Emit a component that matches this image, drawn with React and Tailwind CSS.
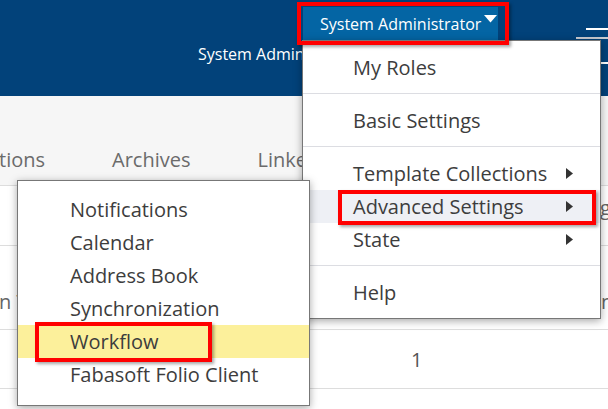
import React from "react";

function Arrow() {
  return (
    <svg width="7" height="11" viewBox="0 0 7 11" className="block">
      <path d="M0 0 L7 5.5 L0 11 Z" fill="#333" />
    </svg>
  );
}

function MenuItem({ label, arrow, active }) {
  return (
    <div
      className={
        "h-[33px] flex items-center justify-between pl-[50px] pr-[27px] " +
        (active ? "bg-[#eef0f5]" : "")
      }
    >
      <span>{label}</span>
      {arrow ? <Arrow /> : null}
    </div>
  );
}

export default function App() {
  const sub = [
    "Notifications",
    "Calendar",
    "Address Book",
    "Synchronization",
    "Workflow",
    "Fabasoft Folio Client",
  ];
  return (
    <div className="relative w-[608px] h-[409px] overflow-hidden bg-white font-['Open_Sans',sans-serif]">
      {/* header */}
      <header className="relative h-[96px] bg-[#02427a]">
        <div className="pt-[43px] pl-[198px] text-[16px] leading-[22px] text-white whitespace-nowrap">
          System Administrator
        </div>
        <svg
          className="absolute right-0 top-[27px]"
          width="32"
          height="40"
          viewBox="0 0 32 40"
        >
          <rect x="10" y="1" width="22" height="2" fill="#fff" />
          <rect x="0" y="10" width="32" height="2" fill="#c9ccd2" />
          <rect x="25" y="35" width="7" height="2" fill="#fff" />
        </svg>
      </header>

      {/* tabs band */}
      <div className="h-[90px] bg-[#f6f6f6] border-b border-[#dddddd] flex items-end gap-[67px] pb-[12px] text-[20px] leading-[27px] text-[#6b6b6b] whitespace-nowrap">
        <span className="-ml-[1px]">tions</span>
        <span>Archives</span>
        <span>Linked Objects</span>
      </div>

      {/* table rows */}
      <div className="h-[60px] border-b border-[#dddddd] flex justify-between pt-[8px] text-[20px] leading-[27px] text-[#666]">
        <span></span>
        <span className="w-[8px] overflow-hidden">g</span>
      </div>
      <div className="h-[84px] border-b border-[#dddddd] flex items-end justify-between pb-[14px] text-[20px] leading-[27px] text-[#666] whitespace-nowrap">
        <span className="-ml-[1px]">n T</span>
        <span className="w-[7px] overflow-hidden">n</span>
      </div>
      <div className="h-[59px] border-b border-[#dddddd] flex items-center pl-[411px] text-[20px] leading-[27px] text-[#555]">
        1
      </div>

      {/* trigger button */}
      <div className="absolute left-[303px] top-[7px] w-[195px] h-[33px] bg-[#0465a4] flex items-center pl-[17px] text-[16px] text-white whitespace-nowrap">
        <span>System Administrator</span>
        <svg className="ml-[3px] -mt-[10px]" width="13" height="8" viewBox="0 0 13 8">
          <path d="M0 0 L13 0 L6.5 7.5 Z" fill="#fff" />
        </svg>
      </div>

      {/* main dropdown */}
      <div className="absolute left-[302px] top-[40px] w-[299px] bg-white border border-[#777] shadow-[0_2px_8px_rgba(0,0,0,0.35)] text-[20px] text-[#3d3d3d] whitespace-nowrap">
        <div className="pt-[10px] pb-[9px] border-b border-[#dcdde2]">
          <MenuItem label="My Roles" />
        </div>
        <div className="pt-[10px] pb-[9px] border-b border-[#dcdde2]">
          <MenuItem label="Basic Settings" />
        </div>
        <div className="pt-[10px] pb-[9px] border-b border-[#dcdde2]">
          <MenuItem label="Template Collections" arrow />
          <MenuItem label="Advanced Settings" arrow active />
          <MenuItem label="State" arrow />
        </div>
        <div className="pt-[10px] pb-[9px]">
          <MenuItem label="Help" />
        </div>
      </div>

      {/* submenu */}
      <div className="absolute left-[17px] top-[180px] w-[293px] h-[226px] bg-white border border-[#777] shadow-[0_2px_8px_rgba(0,0,0,0.35)] pt-[12px] text-[20px] text-[#3d3d3d] whitespace-nowrap">
        {sub.map((s) => (
          <div
            key={s}
            className={
              "h-[33px] flex items-center pl-[52px] " +
              (s === "Workflow" ? "bg-[#fcf09b]" : "")
            }
          >
            {s}
          </div>
        ))}
      </div>

      {/* red annotation boxes */}
      <div className="absolute left-[297px] top-[2px] w-[212px] h-[43px] border-[4px] border-[#f00] shadow-[2px_2px_3px_rgba(0,0,0,0.35)]" />
      <div className="absolute left-[338px] top-[190px] w-[258px] h-[35px] border-[4px] border-[#f00] shadow-[2px_2px_3px_rgba(0,0,0,0.35)]" />
      <div className="absolute left-[35px] top-[322px] w-[177px] h-[40px] border-[4px] border-[#f00] shadow-[2px_2px_3px_rgba(0,0,0,0.35)]" />
    </div>
  );
}
